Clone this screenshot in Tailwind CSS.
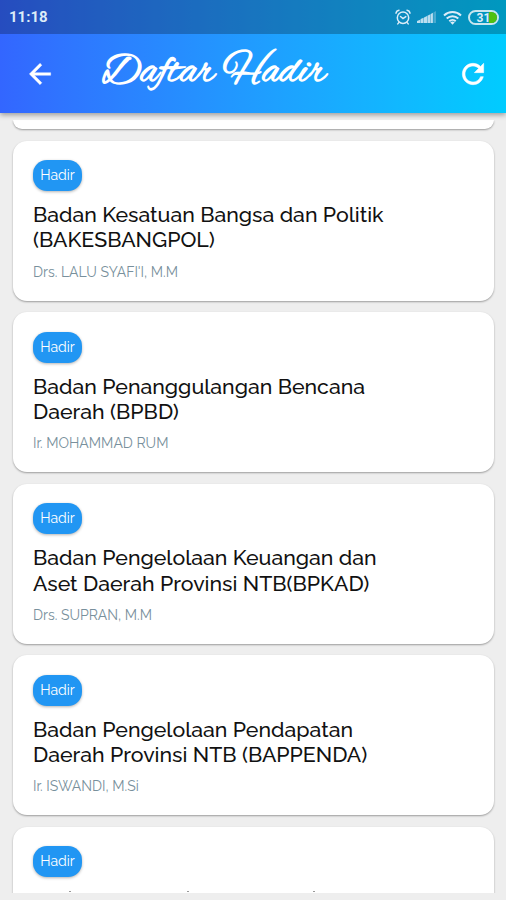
<!DOCTYPE html>
<html lang="id">
<head>
  <meta charset="UTF-8">
  <meta name="viewport" content="width=device-width, initial-scale=1">
  <title>Daftar Hadir</title>
  <script src="https://cdn.jsdelivr.net/npm/@tailwindcss/browser@4"></script>
</head>
<body class="h-[900px] overflow-hidden bg-[#eeeeee] font-['Raleway','Lato',sans-serif]">
<div class="flex h-full flex-col">

  <!-- Header -->
  <header class="relative z-10 h-[113px] shrink-0 bg-linear-to-r from-[#3366ff] to-[#00ccff] shadow-[0_2px_5px_rgba(0,0,0,0.35)]">
    <!-- Status bar -->
    <div class="flex h-[34px] items-center justify-between bg-black/25 pl-[9px] pr-[7px] text-[#dcecf8]">
      <span class="pt-px font-['Roboto',sans-serif] text-[15px] font-bold">11:18</span>
      <div class="flex items-center">
        <svg class="mr-[6px] h-4 w-4" viewBox="0 0 16 16" fill="none" stroke="currentColor" stroke-width="1.5" stroke-linecap="round">
          <circle cx="8" cy="8.8" r="5.7"/>
          <path d="M5.5 7.5L8 9.6l2.8-2M1 4.2C1.3 2.6 2.5 1.4 4 1.2M15 4.2C14.7 2.6 13.5 1.4 12 1.2M4 13.4l-1.2 1.5M12 13.4l1.2 1.5"/>
        </svg>
        <svg class="mr-[7px] h-[12px] w-[19px]" viewBox="0 0 19 13" preserveAspectRatio="none" fill="currentColor">
          <path d="M0 13v-2.2l3.2-1.4V13zM3.6 13V8.8l3-1.4V13zM7 13V7l3-1.6V13zM10.4 13V5.2l3-1.6V13zM13.8 13V3.2L15.9 2v11z" opacity=".85"/>
          <path d="M16.4 13V1.5L19 0v13z" opacity=".3"/>
        </svg>
        <svg class="mr-[6px] h-[15px] w-[19px]" viewBox="0 0 19 15" fill="none" stroke="currentColor" stroke-width="2">
          <path d="M1 5.4c4.8-4.5 12.2-4.5 17 0M3.7 8.4c3.3-3 8.3-3 11.6 0M6.3 11.2c1.8-1.7 4.6-1.7 6.4 0"/>
          <path d="M7.3 12.2c1.3-1.1 3.1-1.1 4.4 0L9.5 14.8z" fill="currentColor" stroke="none"/>
        </svg>
        <div class="relative flex h-[15px] w-[31px] items-center justify-center overflow-hidden rounded-full border-2 border-[#c8e6ef] font-['Roboto',sans-serif] text-[12px] font-bold leading-none">
          <span class="absolute inset-y-0 right-0 w-[8px] bg-[#4fc010]"></span>
          <span class="relative pt-px">31</span>
        </div>
      </div>
    </div>
    <!-- Toolbar -->
    <div class="flex h-[79px] items-center pl-[24px] pr-[17px] text-white">
      <svg class="h-8 w-8 shrink-0" viewBox="0 0 24 24" fill="currentColor">
        <path d="M20 11H7.83l5.59-5.59L12 4l-8 8 8 8 1.41-1.41L7.83 13H20v-2z" stroke="currentColor" stroke-width=".3"/>
      </svg>
      <h1 class="ml-[46px] grow whitespace-nowrap pb-px font-['Alex_Brush',cursive] text-[42px] font-bold leading-none">Daftar Hadir</h1>
      <svg class="h-8 w-8 shrink-0" viewBox="0 0 24 24" fill="currentColor">
        <path d="M17.65 6.35C16.2 4.9 14.21 4 12 4c-4.42 0-7.99 3.58-7.99 8s3.57 8 7.99 8c3.73 0 6.84-2.55 7.73-6h-2.08c-.82 2.33-3.04 4-5.65 4-3.31 0-6-2.69-6-6s2.69-6 6-6c1.66 0 3.14.69 4.22 1.78L13 11h7V4l-2.35 2.35z" stroke="currentColor" stroke-width=".4"/>
      </svg>
    </div>
  </header>

  <!-- Attendance list -->
  <main class="mt-[7px] flex h-[773px] shrink-0 flex-col gap-[11.6px] overflow-hidden pl-[13px] pr-[12px]">
    <div class="h-[9px] shrink-0 rounded-b-[14px] bg-white shadow-[0_1px_2px_rgba(0,0,0,0.35)]"></div>

    <article class="h-[160px] shrink-0 rounded-[14px] bg-white px-5 pt-[19.5px] shadow-[0_1px_2px_rgba(0,0,0,0.35)]">
      <span class="flex h-[31px] w-[49px] items-center justify-center rounded-[14px] bg-[#2196f3] pb-px text-[14px] text-white shadow-[0_1px_3px_rgba(0,0,0,0.3)]">Hadir</span>
      <h2 class="mt-[11px] whitespace-nowrap text-[21.3px] font-medium leading-[25.3px] text-[#111]">Badan Kesatuan Bangsa dan Politik<br>(BAKESBANGPOL)</h2>
      <p class="mt-[9px] text-[14px] leading-[20px] text-[#78909c]">Drs. LALU SYAFI'I, M.M</p>
    </article>

    <article class="h-[160px] shrink-0 rounded-[14px] bg-white px-5 pt-[19.5px] shadow-[0_1px_2px_rgba(0,0,0,0.35)]">
      <span class="flex h-[31px] w-[49px] items-center justify-center rounded-[14px] bg-[#2196f3] text-[14px] text-white shadow-[0_1px_3px_rgba(0,0,0,0.3)]">Hadir</span>
      <h2 class="mt-[11px] whitespace-nowrap text-[21.3px] font-medium leading-[25.3px] text-[#111]">Badan Penanggulangan Bencana<br>Daerah (BPBD)</h2>
      <p class="mt-[9px] text-[14px] leading-[20px] text-[#78909c]">Ir. MOHAMMAD RUM</p>
    </article>

    <article class="h-[160px] shrink-0 rounded-[14px] bg-white px-5 pt-[19.5px] shadow-[0_1px_2px_rgba(0,0,0,0.35)]">
      <span class="flex h-[31px] w-[49px] items-center justify-center rounded-[14px] bg-[#2196f3] pb-px text-[14px] text-white shadow-[0_1px_3px_rgba(0,0,0,0.3)]">Hadir</span>
      <h2 class="mt-[11px] whitespace-nowrap text-[21.3px] font-medium leading-[25.3px] text-[#111]">Badan Pengelolaan Keuangan dan<br>Aset Daerah Provinsi NTB(BPKAD)</h2>
      <p class="mt-[9px] text-[14px] leading-[20px] text-[#78909c]">Drs. SUPRAN, M.M</p>
    </article>

    <article class="h-[160px] shrink-0 rounded-[14px] bg-white px-5 pt-[19.5px] shadow-[0_1px_2px_rgba(0,0,0,0.35)]">
      <span class="flex h-[31px] w-[49px] items-center justify-center rounded-[14px] bg-[#2196f3] text-[14px] text-white shadow-[0_1px_3px_rgba(0,0,0,0.3)]">Hadir</span>
      <h2 class="mt-[11px] whitespace-nowrap text-[21.3px] font-medium leading-[25.3px] text-[#111]">Badan Pengelolaan Pendapatan<br>Daerah Provinsi NTB (BAPPENDA)</h2>
      <p class="mt-[9px] text-[14px] leading-[20px] text-[#78909c]">Ir. ISWANDI, M.Si</p>
    </article>

    <!-- Cut off by the bottom of the list -->
    <article class="relative h-[160px] shrink-0 rounded-[14px] bg-white px-5 pt-[19.5px] shadow-[0_1px_2px_rgba(0,0,0,0.35)]">
      <span class="flex h-[31px] w-[49px] items-center justify-center rounded-[14px] bg-[#2196f3] pb-px text-[14px] text-white shadow-[0_1px_3px_rgba(0,0,0,0.3)]">Hadir</span>
      <span class="absolute left-[56px] top-[64.5px] h-px w-[2px] bg-[#999]"></span>
      <span class="absolute left-[174px] top-[64.5px] h-px w-[2px] bg-[#999]"></span>
      <span class="absolute left-[300px] top-[64.5px] h-px w-[2px] bg-[#999]"></span>
    </article>
  </main>

</div>
</body>
</html>
